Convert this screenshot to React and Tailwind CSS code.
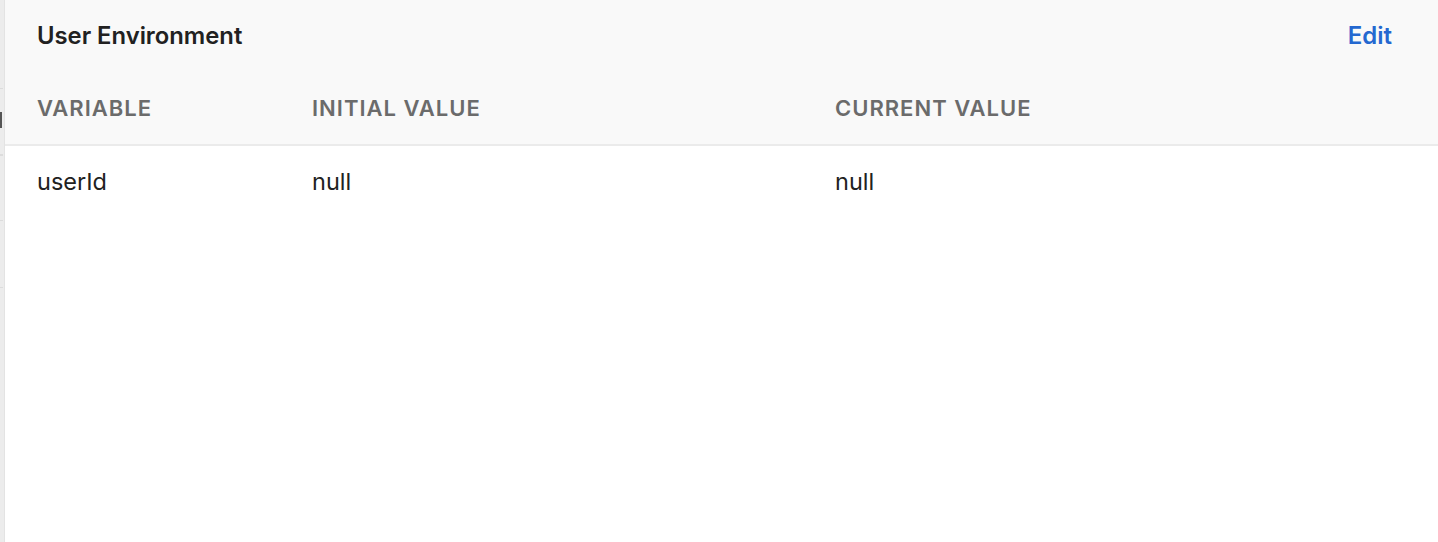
export default function App() {
  const rows = [{ name: "userId", initial: "null", current: "null" }];

  return (
    <div className="flex w-[1438px] h-[542px] bg-white overflow-hidden" style={{ fontFamily: "Inter, 'Noto Sans', sans-serif" }}>
      {/* sliver of the page underneath */}
      <div className="w-[4px] shrink-0 bg-[#ececec] flex flex-col">
        <div className="h-[88px]" />
        <div className="h-[1px] w-[3px] bg-[#dcdcdc]" />
        <div className="h-[23px]" />
        <div className="h-[16px] w-[2px] bg-[#555]" />
        <div className="h-[26px]" />
        <div className="h-[2px] w-[3px] bg-[#dcdcdc]" />
        <div className="h-[64px]" />
        <div className="h-[1px] w-[3px] bg-[#dcdcdc]" />
        <div className="h-[66px]" />
        <div className="h-[1px] w-[3px] bg-[#dcdcdc]" />
      </div>

      <div className="flex-1 flex flex-col border-l border-[#e3e3e3]">
        <div className="bg-[#f9f9f9] border-b-2 border-[#ebebeb]">
          <div className="h-[72px] flex items-center justify-between pl-[32px] pr-[46px]">
            <h2 className="text-[23.8px] font-semibold text-[#212121]">User Environment</h2>
            <button className="text-[24px] font-semibold text-[#2468d0]">Edit</button>
          </div>
          <div className="h-[72px] flex items-center pl-[32px] text-[22px] tracking-[1px] font-semibold text-[#6b6b6b] uppercase">
            <div className="w-[275px]">Variable</div>
            <div className="w-[523px]">Initial Value</div>
            <div>Current Value</div>
          </div>
        </div>
        {rows.map((r) => (
          <div key={r.name} className="h-[72px] flex items-center pl-[32px] text-[23.5px] text-[#212121]">
            <div className="w-[275px]">{r.name}</div>
            <div className="w-[523px]">{r.initial}</div>
            <div>{r.current}</div>
          </div>
        ))}
      </div>
    </div>
  );
}
